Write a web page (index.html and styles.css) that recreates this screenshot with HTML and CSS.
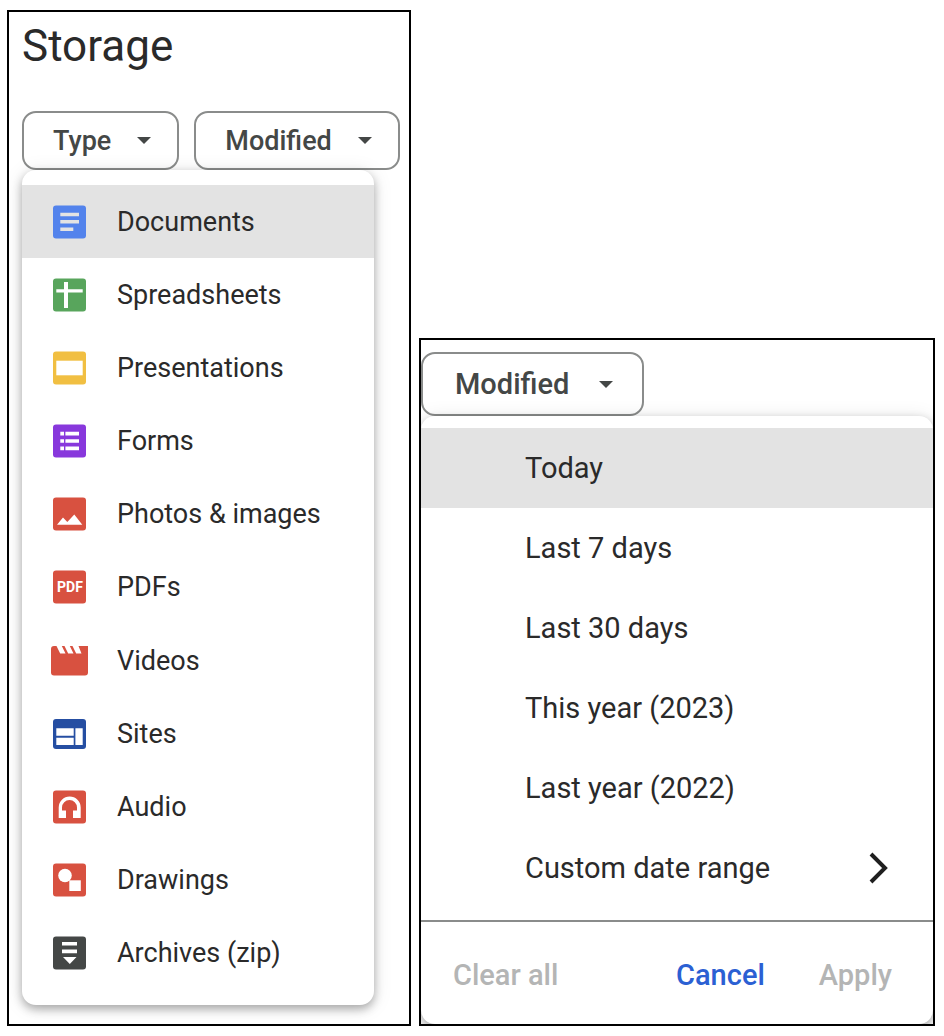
FILE: index.html
```html
<!DOCTYPE html>
<html lang="en">
<head>
<meta charset="utf-8">
<meta name="viewport" content="width=device-width, initial-scale=1">
<title>Storage</title>
<link rel="stylesheet" href="styles.css">
</head>
<body>
<main class="page">
  <section class="panel type-panel">
    <h1>Storage</h1>
    <div class="chips">
      <button class="chip" type="button" aria-expanded="true">Type
        <svg class="caret" viewBox="0 0 14 7"><path d="M0 0h14L7 7z"/></svg>
      </button>
      <button class="chip" type="button">Modified
        <svg class="caret" viewBox="0 0 14 7"><path d="M0 0h14L7 7z"/></svg>
      </button>
    </div>
    <div class="menu type-menu">
      <button class="item active" type="button">
        <svg class="icon" viewBox="0 0 38 34"><rect x="2" y=".5" width="33" height="33" rx="3" fill="#5383ec"/><path d="M9.3 7.7H28v3.5H9.3zM9.3 15H28v3.5H9.3zM9.3 22.4h13v3.5h-13z" fill="#e3e3e3"/></svg>
        Documents
      </button>
      <button class="item" type="button">
        <svg class="icon" viewBox="0 0 38 34"><rect x="2" y=".5" width="33" height="33" rx="3" fill="#58a55c"/><path d="M13 4h4v7.2h14.7v3.4H17V30h-4V14.6H5.3v-3.4H13z" fill="#fff"/></svg>
        Spreadsheets
      </button>
      <button class="item" type="button">
        <svg class="icon" viewBox="0 0 38 34"><rect x="2" y=".5" width="33" height="33" rx="3" fill="#f1bf42"/><path d="M5.3 9.7h26.4v14.6H5.3z" fill="#fff"/></svg>
        Presentations
      </button>
      <button class="item" type="button">
        <svg class="icon" viewBox="0 0 38 34"><rect x="2" y=".5" width="33" height="33" rx="3" fill="#8838dc"/><path d="M9.3 7.8H13v3.6H9.3zM14.4 7.8H28v3.6H14.4zM9.3 15.2H13v3.6H9.3zM14.4 15.2H28v3.6H14.4zM9.3 22.6H13v3.6H9.3zM14.4 22.6H28v3.6H14.4z" fill="#fff"/></svg>
        Forms
      </button>
      <button class="item" type="button">
        <svg class="icon" viewBox="0 0 38 34"><rect x="2" y=".5" width="33" height="33" rx="3" fill="#d85140"/><path d="M6 27.8l6-7.3 4.3 4.6 7-7.6 8 10.3z" fill="#fff"/></svg>
        Photos &amp; images
      </button>
      <button class="item" type="button">
        <svg class="icon" viewBox="0 0 38 34"><rect x="2" y=".5" width="33" height="33" rx="3" fill="#d85140"/><text class="pdf" x="19" y="22" text-anchor="middle">PDF</text></svg>
        PDFs
      </button>
      <button class="item" type="button">
        <svg class="icon" viewBox="0 0 38 34"><path d="M3 2h2.500l3.700 7.600h5.300L10.800 2h2.700l3.700 7.600h5.300L18.800 2h2.700l3.700 7.600h5.300L27.500 2H37v26.500a3 3 0 0 1-3 3H3a3 3 0 0 1-3-3V5a3 3 0 0 1 3-3z" fill="#d85140"/></svg>
        Videos
      </button>
      <button class="item" type="button">
        <svg class="icon" viewBox="0 0 38 34"><rect x="2" y="2" width="33" height="30" rx="3" fill="#254ea2"/><path d="M5.3 11.3h17.4v7.4H5.3zM5.3 20.7h17.4V28H5.3zM24.4 11.3h7.3V28h-7.3z" fill="#fff"/></svg>
        Sites
      </button>
      <button class="item" type="button">
        <svg class="icon" viewBox="0 0 38 34"><rect x="2" y=".5" width="33" height="33" rx="3" fill="#d85140"/><path d="M7.7 28V17.500a11 11 0 0 1 22 0V28H22v-7.500h4v-3a7.500 7.500 0 0 0-15 0v3h4V28z" fill="#fff"/></svg>
        Audio
      </button>
      <button class="item" type="button">
        <svg class="icon" viewBox="0 0 38 34"><rect x="2" y=".5" width="33" height="33" rx="3" fill="#d85140"/><circle cx="14" cy="12.5" r="6.8" fill="#fff"/><path d="M18.3 17.3h11.5V28H18.3z" fill="#fff"/></svg>
        Drawings
      </button>
      <button class="item" type="button">
        <svg class="icon" viewBox="0 0 38 34"><rect x="2" y=".5" width="33" height="33" rx="3" fill="#444746"/><path d="M11 6h15v3.500H11zM11 13.500h15v3.700H11zM12 21h13.500l-6.700 7z" fill="#fff"/></svg>
        Archives (zip)
      </button>
    </div>
  </section>

  <section class="panel date-panel">
    <button class="chip chip-large" type="button" aria-expanded="true">Modified
      <svg class="caret" viewBox="0 0 14 7"><path d="M0 0h14L7 7z"/></svg>
    </button>
    <div class="menu date-menu">
      <button class="item active" type="button">Today</button>
      <button class="item" type="button">Last 7 days</button>
      <button class="item" type="button">Last 30 days</button>
      <button class="item" type="button">This year (2023)</button>
      <button class="item" type="button">Last year (2022)</button>
      <button class="item" type="button">Custom date range
        <svg class="chevron" viewBox="0 0 20 32"><path d="M2 2l14 14L2 30"/></svg>
      </button>
      <div class="actions">
        <button class="action clear" type="button" disabled>Clear all</button>
        <button class="action cancel" type="button">Cancel</button>
        <button class="action" type="button" disabled>Apply</button>
      </div>
    </div>
  </section>
</main>
</body>
</html>
```
FILE: styles.css
```css
* {
  box-sizing: border-box;
}
body {
  margin: 0;
  background: #fff;
  color: #2a2a2a;
  font-family: Roboto, "Liberation Sans", sans-serif;
  font-size: 27px;
}
button {
  margin: 0;
  padding: 0;
  border: 0;
  background: none;
  color: inherit;
  font: inherit;
  text-align: left;
  white-space: nowrap;
  cursor: pointer;
}
.page {
  display: grid;
  grid-template-columns: 404fr 516fr;
  gap: 8px;
  align-items: end;
  padding: 10px 9px 10px 7px;
}
.panel {
  border: 2px solid #000;
  overflow: hidden;
}
.type-panel {
  padding: 8px 10px 19px 13px;
}
h1 {
  margin: 0 0 39px;
  font-size: 44px;
  line-height: 52px;
  font-weight: 400;
}
.chips {
  display: flex;
  gap: 15px;
}
.chip {
  display: flex;
  align-items: center;
  justify-content: space-between;
  gap: 26px;
  height: 59px;
  padding: 0 26px 0 29px;
  border: 2px solid #8a8c8b;
  border-radius: 14px;
  color: #444746;
  font-weight: 500;
}
.chip-large {
  height: 64px;
  gap: 30px;
  padding: 0 29px 0 32px;
  font-size: 29px;
}
.caret {
  width: 14px;
  height: 7px;
  fill: #444746;
}
.menu {
  position: relative;
  background: #fff;
  border-radius: 14px;
  box-shadow: 0 4px 10px rgba(0, 0, 0, 0.3), 0 2px 20px rgba(0, 0, 0, 0.1);
}
.type-menu {
  display: grid;
  grid-auto-rows: 1fr;
  min-height: 835px;
  margin-right: 25px;
  padding: 15px 0;
}
.item {
  display: flex;
  align-items: center;
  width: 100%;
}
.type-menu .item {
  gap: 28px;
  padding-left: 29px;
}
.item.active {
  background: #e3e3e3;
}
.icon {
  flex: none;
  width: 38px;
  height: 34px;
}
.pdf {
  fill: #fff;
  font-family: Roboto, "Liberation Sans", sans-serif;
  font-size: 14px;
  font-weight: 700;
}
.date-panel {
  padding-top: 12px;
}
.date-menu {
  padding-top: 12px;
  font-size: 29px;
}
.date-menu .item {
  justify-content: space-between;
  height: 80px;
  padding: 0 44px 0 104px;
}
.chevron {
  width: 20px;
  height: 32px;
  fill: none;
  stroke: #1f1f1f;
  stroke-width: 4;
}
.actions {
  display: flex;
  align-items: center;
  gap: 54px;
  height: 104px;
  margin-top: 12px;
  padding: 4px 41px 0 32px;
  border-top: 2px solid #8a8c8b;
}
.action {
  font-weight: 500;
}
.action:disabled {
  color: #b4b5b5;
  cursor: default;
}
.clear {
  margin-right: auto;
}
.cancel {
  color: #2b60d3;
}
```
